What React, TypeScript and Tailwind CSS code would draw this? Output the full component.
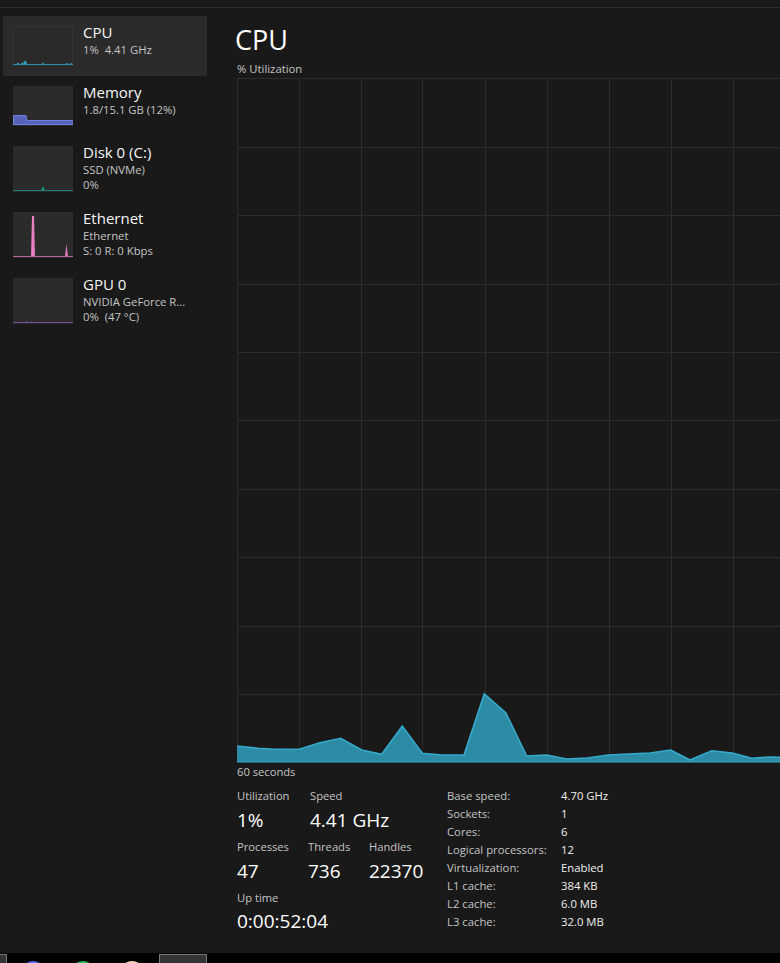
const chartPoints = [
  [0, 668], [21, 670.3], [38, 671.3], [63, 671], [83, 664.7], [103.7, 660.3], [124.7, 672], [144.7, 676.3],
  [165.3, 648], [185.3, 675.3], [204.7, 677], [227, 677], [247.3, 616], [268.7, 634.7], [289.7, 678],
  [309.7, 677], [329.7, 681], [350.3, 680], [371.3, 677], [391.3, 676], [413, 675], [433.7, 672],
  [453, 682], [474.7, 672.7], [495.3, 675], [514.7, 680.3], [533, 679], [543, 679.3],
];

const verticals = [0.5, 62.5, 124.5, 185.5, 248.5, 310.5, 372.5, 434.5, 496.5];
const horizontals = [0.5, 69.5, 137.5, 206.5, 274.5, 342.5, 411.5, 479.5, 548.5, 616.5];

function CpuChart() {
  const line = chartPoints.map((p) => p.join(",")).join(" ");
  return (
    <svg width="543" height="685" viewBox="0 0 543 685" className="block">
      {verticals.map((x) => (
        <line key={x} x1={x} y1="0" x2={x} y2="684" stroke="#2c2c2c" />
      ))}
      {horizontals.map((y) => (
        <line key={y} x1="0" y1={y} x2="543" y2={y} stroke="#2c2c2c" />
      ))}
      <polygon points={`0,684 ${line} 543,684`} fill="#2d8ba6" />
      <polyline points={line} fill="none" stroke="#35aacb" strokeWidth="1.6" />
      <line x1="0" y1="684" x2="543" y2="684" stroke="#35aacb" />
    </svg>
  );
}

function Thumb({ h, bg, children }: { h: number; bg: string; children: React.ReactNode }) {
  return (
    <svg width="60" height={h} viewBox={`0 0 60 ${h}`} className={`block shrink-0 ${bg}`}>
      {children}
    </svg>
  );
}

function SideItem({
  title,
  lines,
  active,
  thumb,
}: {
  title: string;
  lines: string[];
  active?: boolean;
  thumb: React.ReactNode;
}) {
  return (
    <div className={`flex gap-[10px] py-[10px] pl-[10px] ${active ? "bg-[#2b2b2b]" : ""}`}>
      {thumb}
      <div className="-mt-1 min-w-0">
        <div className="text-[15px] leading-5 text-[#f5f5f5]">{title}</div>
        {lines.map((l) => (
          <div key={l} className="text-[11.3px] leading-[15px] whitespace-pre text-[#c4c4c4]">
            {l}
          </div>
        ))}
      </div>
    </div>
  );
}

function Stat({ label, value, width }: { label: string; value: string; width: string }) {
  return (
    <div className={width}>
      <div className="text-[11.2px] leading-4 text-[#c4c4c4]">{label}</div>
      <div className="mt-[2px] text-[19px] leading-7 text-white">{value}</div>
    </div>
  );
}

const specs = [
  ["Base speed:", "4.70 GHz"],
  ["Sockets:", "1"],
  ["Cores:", "6"],
  ["Logical processors:", "12"],
  ["Virtualization:", "Enabled"],
  ["L1 cache:", "384 KB"],
  ["L2 cache:", "6.0 MB"],
  ["L3 cache:", "32.0 MB"],
];

export default function App() {
  return (
    <div className="flex h-[963px] w-[780px] flex-col overflow-hidden bg-[#191919] font-['Open_Sans',sans-serif]">
      <div className="h-2 shrink-0 border-b border-[#2b2b2b]" />
      <div className="flex h-[945px] shrink-0">
        <div className="ml-[3px] w-[204px] shrink-0 pt-2">
          <SideItem
            active
            title="CPU"
            lines={["1%  4.41 GHz"]}
            thumb={
              <Thumb h={40} bg="bg-[#2a2a2a]">
                <rect x="0.5" y="0.5" width="59" height="39" fill="none" stroke="#333333" />
                <polygon
                  points="0,39 4,38 4,37 6,37 6,38 8,38 9,36 10,38 11,35 13,35 14,38 29,38 30,36 31,38 53,38 54,36.5 55,38 57,38 58,36.5 59,38 60,39"
                  fill="#2c9ebc"
                />
                <line x1="0" y1="38.5" x2="60" y2="38.5" stroke="#2a8ca6" />
              </Thumb>
            }
          />
          <SideItem
            title="Memory"
            lines={["1.8/15.1 GB (12%)"]}
            thumb={
              <Thumb h={40} bg="bg-[#2b2b2b]">
                <polygon points="0,29.5 13,29.5 14,34.5 60,34.5 60,39 0,39" fill="#5663b8" />
                <polyline points="0.5,39 0.5,29.5 13,29.5 14,34.5 60,34.5" fill="none" stroke="#6f7fe0" />
                <line x1="0" y1="38.5" x2="60" y2="38.5" stroke="#6f7fe0" />
              </Thumb>
            }
          />
          <SideItem
            title="Disk 0 (C:)"
            lines={["SSD (NVMe)", "0%"]}
            thumb={
              <Thumb h={46} bg="bg-[#2b2b2b]">
                <polygon points="28,45 30,40 32,45" fill="#1f9a90" />
                <line x1="0" y1="44.5" x2="60" y2="44.5" stroke="#1b7d76" />
              </Thumb>
            }
          />
          <SideItem
            title="Ethernet"
            lines={["Ethernet", "S: 0 R: 0 Kbps"]}
            thumb={
              <Thumb h={46} bg="bg-[#2b2b2b]">
                <polygon points="18,45 19,4 21,4 22,45" fill="#ec80c4" />
                <polygon points="52,45 53.5,32 55,45" fill="#ec80c4" />
                <line x1="0" y1="44.5" x2="60" y2="44.5" stroke="#b8649c" />
              </Thumb>
            }
          />
          <SideItem
            title="GPU 0"
            lines={["NVIDIA GeForce R...", "0%  (47 °C)"]}
            thumb={
              <Thumb h={46} bg="bg-[#2b2b2b]">
                <polygon points="12,45 13.5,43 15,45" fill="#8a63b4" />
                <line x1="0" y1="44.5" x2="60" y2="44.5" stroke="#6f5296" />
              </Thumb>
            }
          />
        </div>
        <div className="min-w-0 flex-1 pl-[30px] pt-[14px]">
          <h1 className="-ml-[2px] text-[27px] leading-9 font-normal text-white">CPU</h1>
          <div className="mt-[3px] text-[11.3px] leading-4 text-[#c4c4c4]">% Utilization</div>
          <div className="mt-px">
            <CpuChart />
          </div>
          <div className="mt-px text-[11.2px] leading-4 text-[#c4c4c4]">60 seconds</div>
          <div className="mt-2 flex">
            <div className="w-[210px] shrink-0">
              <div className="flex">
                <Stat label="Utilization" value="1%" width="w-[73px]" />
                <Stat label="Speed" value="4.41 GHz" width="w-[120px]" />
              </div>
              <div className="mt-[5px] flex">
                <Stat label="Processes" value="47" width="w-[71px]" />
                <Stat label="Threads" value="736" width="w-[61px]" />
                <Stat label="Handles" value="22370" width="w-[70px]" />
              </div>
              <div className="mt-[5px]">
                <div className="text-[11.2px] leading-4 text-[#c4c4c4]">Up time</div>
                <div className="mt-px text-[19px] leading-7 text-white">0:00:52:04</div>
              </div>
            </div>
            <div className="-mt-px grid grid-cols-[114px_1fr] auto-rows-[18px] text-[11.3px] leading-[18px]">
              {specs.map(([k, v]) => (
                <div key={k} className="contents">
                  <div className="text-[#c4c4c4]">{k}</div>
                  <div className="text-[#f0f0f0]">{v}</div>
                </div>
              ))}
            </div>
          </div>
        </div>
      </div>
      <div className="flex h-[10px] shrink-0 items-start overflow-hidden bg-black">
        <div className="mt-px h-12 w-[7px] shrink-0 border border-l-0 border-[#777777] bg-[#333333]" />
        <div className="ml-[14px] mt-2 size-6 shrink-0 rounded-full bg-[#5865f2]" />
        <div className="ml-[26px] mt-2 size-6 shrink-0 rounded-full bg-[#1db954]" />
        <div className="ml-[25px] mt-2 size-6 shrink-0 rounded-full bg-[#f6d3b0]" />
        <div className="ml-[15px] mt-px h-12 w-12 shrink-0 border border-[#777777] bg-[#333333]" />
      </div>
    </div>
  );
}
